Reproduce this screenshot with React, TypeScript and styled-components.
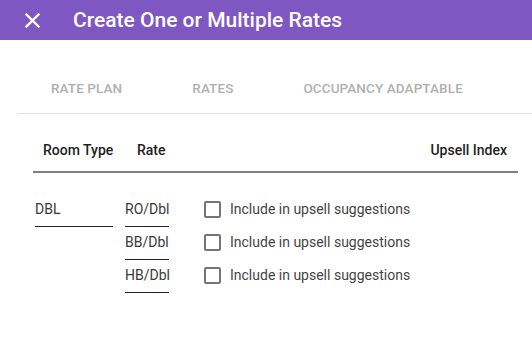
import React from 'react';
import styled, { createGlobalStyle } from 'styled-components';

const GlobalStyle = createGlobalStyle`
  html, body {
    margin: 0;
    padding: 0;
    background: #ffffff;
    font-family: Roboto, "Liberation Sans", Arial, sans-serif;
  }
`;

const Page = styled.div`
  width: 532px;
  height: 359px;
  overflow: hidden;
  background: #ffffff;
`;

const TopBar = styled.header`
  height: 40px;
  display: flex;
  align-items: center;
  padding-left: 25px;
  background: #7e57c2;
  color: #ffffff;
`;

const CloseButton = styled.button`
  display: flex;
  align-items: center;
  justify-content: center;
  width: 15px;
  height: 15px;
  padding: 0;
  margin: 0 33px 0 0;
  border: none;
  background: none;
  color: #ffffff;
  cursor: pointer;
`;

const Title = styled.h1`
  margin: 0;
  font-size: 21px;
  font-weight: 500;
  line-height: 24px;
`;

const Body = styled.div`
  padding: 0 0 0 17px;
`;

const Tabs = styled.nav`
  margin-top: 24px;
  height: 49px;
  display: flex;
  align-items: center;
  gap: 70px;
  padding-left: 34px;
  border-bottom: 1px solid #e0e0e0;
`;

const Tab = styled.div`
  font-size: 13.5px;
  font-weight: 500;
  letter-spacing: 0.1px;
  color: #b0b0b0;
  text-transform: uppercase;
  line-height: 16px;
  padding-bottom: 1px;
`;

const Table = styled.div`
  margin: 28px 14px 0 16px;
`;

const HeadRow = styled.div`
  display: flex;
  align-items: center;
  padding: 0 11px 13px 10px;
  border-bottom: 2px solid #808080;
`;

const HeadCell = styled.div<{ $width?: number; $grow?: boolean }>`
  font-size: 14px;
  font-weight: 500;
  color: #1e1e1e;
  line-height: 16px;
  width: ${({ $width }) => ($width ? `${$width}px` : 'auto')};
  flex: ${({ $grow }) => ($grow ? 1 : 'none')};
  text-align: ${({ $grow }) => ($grow ? 'right' : 'left')};
`;

const BodyRow = styled.div`
  margin-top: 21px;
  display: flex;
  padding-left: 2px;
`;

const Column = styled.div<{ $gap: number }>`
  display: flex;
  flex-direction: column;
  margin-right: ${({ $gap }) => $gap}px;
`;

const Field = styled.div<{ $width: number }>`
  width: ${({ $width }) => $width}px;
  padding: 7px 0 9px;
  font-size: 14px;
  line-height: 16px;
  color: #3a3a3a;
  border-bottom: 1px solid #1f1f1f;
`;

const CheckRow = styled.label`
  height: 33px;
  padding-bottom: 3px;
  box-sizing: border-box;
  display: flex;
  align-items: center;
  gap: 9px;
  font-size: 14px;
  line-height: 16px;
  color: #444444;
  cursor: pointer;
`;

const Box = styled.span`
  width: 17px;
  height: 17px;
  box-sizing: border-box;
  border: 2px solid #757575;
  border-radius: 2px;
`;

const CloseIcon = () => (
  <svg width="15" height="15" viewBox="0 0 15 15" aria-hidden="true">
    <path d="M1.5 1.5 L13.5 13.5 M13.5 1.5 L1.5 13.5" stroke="currentColor" strokeWidth="2.4" strokeLinecap="square" />
  </svg>
);

const rates = ['RO/Dbl', 'BB/Dbl', 'HB/Dbl'];

export default function App() {
  return (
    <Page>
      <GlobalStyle />
      <TopBar>
        <CloseButton aria-label="Close">
          <CloseIcon />
        </CloseButton>
        <Title>Create One or Multiple Rates</Title>
      </TopBar>
      <Body>
        <Tabs>
          <Tab>Rate Plan</Tab>
          <Tab>Rates</Tab>
          <Tab>Occupancy Adaptable</Tab>
        </Tabs>
        <Table>
          <HeadRow>
            <HeadCell $width={94}>Room Type</HeadCell>
            <HeadCell>Rate</HeadCell>
            <HeadCell $grow>Upsell Index</HeadCell>
          </HeadRow>
          <BodyRow>
            <Column $gap={12}>
              <Field $width={78}>DBL</Field>
            </Column>
            <Column $gap={35}>
              {rates.map((r) => (
                <Field key={r} $width={44}>
                  {r}
                </Field>
              ))}
            </Column>
            <Column $gap={0}>
              {rates.map((r) => (
                <CheckRow key={r}>
                  <Box />
                  Include in upsell suggestions
                </CheckRow>
              ))}
            </Column>
          </BodyRow>
        </Table>
      </Body>
    </Page>
  );
}
